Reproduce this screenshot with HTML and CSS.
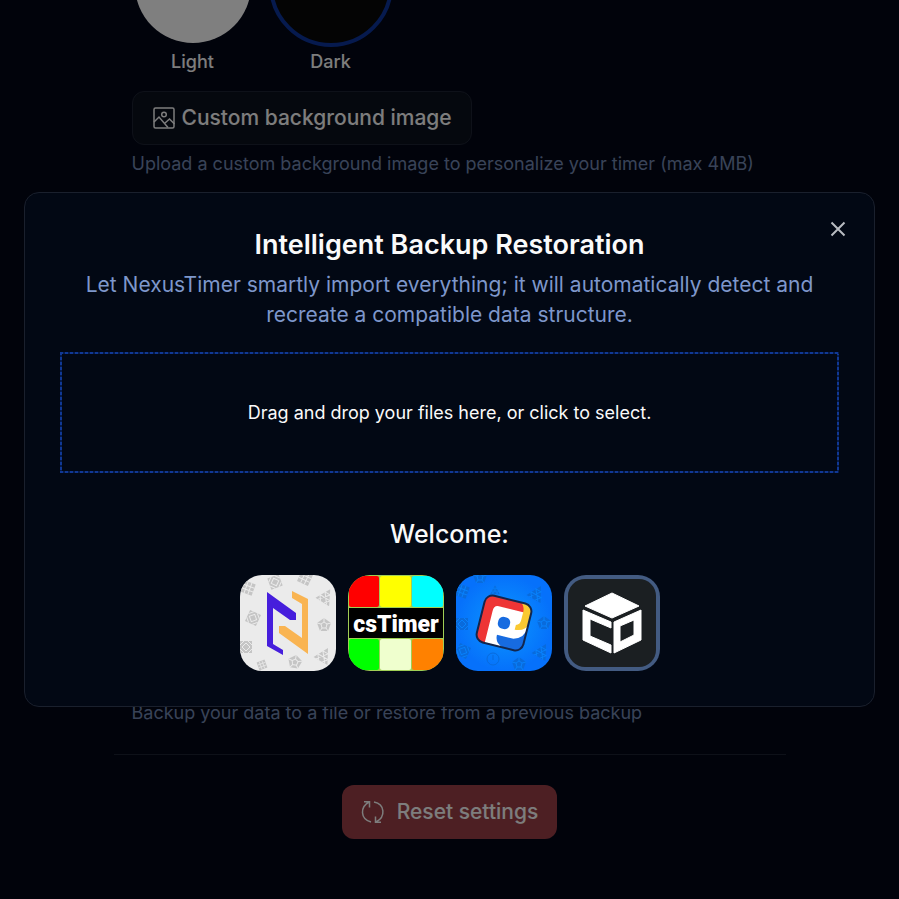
FILE: index.html
```html
<!DOCTYPE html>
<html lang="en">
<head>
<meta charset="utf-8">
<meta name="viewport" content="width=device-width, initial-scale=1">
<title>NexusTimer settings</title>
<link rel="stylesheet" href="styles.css">
</head>
<body>
<main class="settings">
  <section class="appearance">
    <div class="themes">
      <button class="theme" type="button"><span class="swatch-window"><span class="swatch swatch-light"></span></span>Light</button>
      <button class="theme" type="button"><span class="swatch-window"><span class="swatch swatch-dark"></span></span>Dark</button>
    </div>
    <button class="button upload" type="button">
      <svg class="icon" viewBox="0 0 24 24" aria-hidden="true"><rect x="2" y="2" width="20" height="20" rx="1.5"/><circle cx="12" cy="8.5" r="2.3"/><path d="M2 16l5-5 9 10.500M12.500 17.500l5-4.500 5 5"/></svg>
      Custom background image
    </button>
    <p class="hint">Upload a custom background image to personalize your timer (max 4MB)</p>
  </section>
  <section class="data">
    <p class="hint">Backup your data to a file or restore from a previous backup</p>
  </section>
  <footer class="actions">
    <button class="button reset" type="button">
      <svg class="icon" viewBox="0 0 24 24" aria-hidden="true"><path d="M10 22C-1 19-1 7 8 2M3 1.700H8.500V7.500M13 2C24 4 25 17 15 22M20 22.300H14.500V16.500"/></svg>
      Reset settings
    </button>
  </footer>
</main>

<div class="backdrop">
  <section class="dialog" role="dialog" aria-modal="true" aria-labelledby="dialog-title">
    <button class="close" type="button" aria-label="Close"><svg viewBox="0 0 16 16" aria-hidden="true"><path d="M1.500 1.500l13 13M14.500 1.500l-13 13"/></svg></button>
    <h2 class="title" id="dialog-title">Intelligent Backup Restoration</h2>
    <p class="description">Let NexusTimer smartly import everything; it will automatically detect and recreate a compatible data structure.</p>
    <button class="dropzone" type="button">Drag and drop your files here, or click to select.</button>
    <h3 class="welcome">Welcome:</h3>
    <div class="apps">
      <svg class="app" viewBox="0 0 96 96" role="img" aria-label="NexusTimer">
        <defs>
          <g id="penta"><path d="M0-7 7-2 4 6H-4L-7-2Z"/><path class="cut" d="M0-3 3-1 2 3H-2L-3-1ZM0-7V-3M7-2 3-1M4 6 2 3M-4 6-2 3M-7-2-3-1"/></g>
          <g id="grid"><path d="M-6-6H6V6H-6Z"/><path class="cut" d="M-2-6V6M2-6V6M-6-2H6M-6 2H6"/></g>
          <g id="tri"><path d="M0-8 8 7H-8Z"/><path class="cut" d="M-3-3H3L-5 7M3-3-3-3 5 7M-6 2H6L2 7M-6 2-2 7"/></g>
          <g id="star"><path d="M-6-6H6V6H-6Z"/><path class="cut" d="M-6-2-2-6M2-6 6-2M6 2 2 6M-2 6-6 2M0-4 4 0 0 4-4 0Z"/></g>
        </defs>
        <rect width="96" height="96" fill="#ebebeb"/>
        <g class="marks-light">
          <use href="#grid" transform="translate(8 13) rotate(20)"/>
          <use href="#star" transform="translate(35 7) rotate(-20)"/>
          <use href="#grid" transform="translate(65 3) rotate(25)"/>
          <use href="#tri" transform="translate(86 21) rotate(32)"/>
          <use href="#star" transform="translate(13 43) rotate(25)"/>
          <use href="#penta" transform="translate(84 50)"/>
          <use href="#star" transform="translate(6 72)"/>
          <use href="#tri" transform="translate(84 80) rotate(30)"/>
          <use href="#penta" transform="translate(55 87) rotate(10)"/>
          <use href="#grid" transform="translate(22 90) rotate(-20) scale(.7)"/>
        </g>
        <path fill="#461edc" d="M27 17 56 38V45H50L33 33V69L43 75V80L27 71Z"/>
        <path fill="#f9b452" d="M52 16 68 24V79L39 58V51H45L62 63V29L52 23Z"/>
      </svg>
      <svg class="app" viewBox="0 0 96 96" role="img" aria-label="csTimer">
        <rect width="96" height="96" fill="#a0ce55"/>
        <rect x="1" y="1" width="30" height="31" rx="2" fill="#f00"/>
        <rect x="32" y="1" width="31" height="31" rx="2" fill="#ff0"/>
        <rect x="64" y="1" width="31" height="31" rx="2" fill="#0ff"/>
        <rect x="1" y="64" width="30" height="31" rx="2" fill="#0f0"/>
        <rect x="32" y="64" width="31" height="31" rx="2" fill="#efffce"/>
        <rect x="64" y="64" width="31" height="31" rx="2" fill="#ff8100"/>
        <rect x="1" y="33" width="94" height="30" fill="#000"/>
        <text class="cs-text" x="48" y="57" text-anchor="middle">csTimer</text>
      </svg>
      <svg class="app" viewBox="0 0 96 96" role="img" aria-label="Twisty timer">
        <defs><radialGradient id="blue"><stop stop-color="#0b98ff"/><stop offset="1" stop-color="#0671fb"/></radialGradient></defs>
        <rect width="96" height="96" fill="url(#blue)"/>
        <g class="marks-blue">
          <use href="#grid" transform="translate(6 16) rotate(20)"/>
          <use href="#penta" transform="translate(24 2)"/>
          <use href="#tri" transform="translate(39 15) scale(.6)"/>
          <use href="#tri" transform="translate(81 18) rotate(30)"/>
          <use href="#star" transform="translate(6 49)"/>
          <use href="#penta" transform="translate(88 48)"/>
          <use href="#star" transform="translate(7 76) rotate(25)"/>
          <circle class="dial" cx="37" cy="84" r="6"/><path class="dial" d="M37 80V85"/>
          <use href="#penta" transform="translate(63 89)"/>
          <use href="#tri" transform="translate(86 76) rotate(30)"/>
        </g>
        <g transform="translate(48 48) rotate(14)">
          <rect x="-24" y="-24" width="48" height="48" rx="8" fill="#fff"/>
          <path fill="#ee3535" d="M-16-24H12Q18-24 18-15H-9Q-14-15-14-9V24H-16Q-24 24-24 16V-16Q-24-24-16-24Z"/>
          <path fill="#fac932" d="M12-24H16Q24-24 24-16V-5Q23 3 12 4V-1Q16-2 16-7V-16Q16-20 12-24Z"/>
          <path fill="#176be0" d="M24-2V16Q24 24 16 24H5Q-4 22-4 13H13Q24 10 24-2Z"/>
          <rect x="-6" y="-6" width="12" height="12" rx="5" fill="#176be0"/>
          <rect x="-24" y="-24" width="48" height="48" rx="8" fill="none" stroke="#12264d" stroke-width="2"/>
        </g>
      </svg>
      <svg class="app" viewBox="0 0 96 96" role="img" aria-label="CubeDesk">
        <rect width="96" height="96" fill="#435b82"/>
        <rect x="4" y="4" width="88" height="88" rx="17" fill="#1b1f22"/>
        <g fill="#fff" stroke="#fff" stroke-linejoin="round">
          <path d="M48 18 75 31 48 43 21 31Z"/>
          <path d="M19 35 47 47V53L26 44V61L47 70V78L19 65Z"/>
          <path fill-rule="evenodd" d="M50 47 77 35V65L50 78ZM56 51V67L70 60V45Z"/>
        </g>
      </svg>
    </div>
  </section>
</div>
</body>
</html>
```
FILE: styles.css
```css
* { box-sizing: border-box; }
body {
  margin: 0;
  min-height: 100vh;
  background: #020617;
  color: #fafafa;
  font-family: Inter, "Open Sans", sans-serif;
  font-size: 18px;
  line-height: 24px;
}
button { font: inherit; color: inherit; cursor: pointer; }
h2, h3, p { margin: 0; }
.settings { width: 75%; max-width: 672px; margin: 0 auto; }
.appearance, .data { padding: 0 18px; }
.themes { display: flex; gap: 16px; }
.theme {
  display: flex;
  flex-direction: column;
  align-items: center;
  width: 122px;
  padding: 0;
  border: 0;
  background: none;
  font-weight: 500;
}
.swatch-window {
  display: flex;
  align-items: flex-end;
  justify-content: center;
  width: 124px;
  height: 47px;
  margin-bottom: 3px;
  overflow: hidden;
}
.swatch { flex: none; width: 124px; height: 124px; border: 4px solid transparent; border-radius: 50%; }
.swatch-light { background: #fff padding-box; }
.swatch-dark { background: #090909; border-color: #0c359c; }
.button {
  display: inline-flex;
  align-items: center;
  height: 54px;
  padding: 0 18px;
  border: 1px solid transparent;
  border-radius: 12px;
  font-size: 21px;
  font-weight: 500;
}
.icon { width: 24px; height: 24px; fill: none; stroke: currentColor; stroke-width: 1.5; }
.upload { gap: 6px; margin-top: 17px; padding: 0 19px; border-color: #1d2332; background: #0b101d; }
.hint { margin-top: 7px; color: #7286b0; white-space: nowrap; }
.data { margin-top: 525px; }
.actions { margin-top: 29px; padding-top: 30px; border-top: 1px solid #1d2332; text-align: center; }
.reset { gap: 12px; background: #9a3f46; }
.backdrop {
  position: fixed;
  inset: 0;
  display: grid;
  place-items: center;
  padding: 24px;
  background: rgb(0 0 0 / 50%);
}
.dialog {
  position: relative;
  display: flex;
  flex-direction: column;
  align-items: center;
  width: 100%;
  max-width: 1000px;
  padding: 37px 35px 35px;
  border: 1px solid #1a202d;
  border-radius: 15px;
  background: #020814;
  text-align: center;
}
.close { position: absolute; top: 28px; right: 28px; width: 16px; height: 16px; padding: 0; border: 0; background: none; color: #b8bbc1; }
.close svg { display: block; width: 16px; height: 16px; fill: none; stroke: currentColor; stroke-width: 2; }
.title { font-size: 27px; line-height: 30px; font-weight: 600; }
.description { margin-top: 10px; color: #7e97cb; font-size: 21px; line-height: 30px; }
.dropzone {
  --dash: #103894 0 3px, #061b4a 3px 5px;
  width: 100%;
  height: 121px;
  margin-top: 22px;
  padding: 0;
  border: 0;
  background:
    repeating-linear-gradient(90deg, var(--dash)) top / 100% 2px no-repeat,
    repeating-linear-gradient(90deg, var(--dash)) bottom / 100% 2px no-repeat,
    repeating-linear-gradient(var(--dash)) left / 2px 100% no-repeat,
    repeating-linear-gradient(var(--dash)) right / 2px 100% no-repeat;
}
.welcome { margin-top: 46px; font-size: 25px; line-height: 30px; font-weight: 500; }
.apps { display: flex; flex-wrap: wrap; justify-content: center; gap: 12px; margin-top: 26px; }
.app { width: 96px; height: 96px; border-radius: 22px; overflow: hidden; }
.marks-light { fill: #c5c5c5; --cut: #ebebeb; }
.marks-blue { fill: #096bdc; --cut: #0881fc; }
.cut { fill: none; stroke: var(--cut); stroke-width: 1; }
.dial { fill: none; stroke: #096bdc; stroke-width: 1; }
.cs-text { fill: #fff; font: 900 23px Roboto, "Liberation Sans", sans-serif; }
```
